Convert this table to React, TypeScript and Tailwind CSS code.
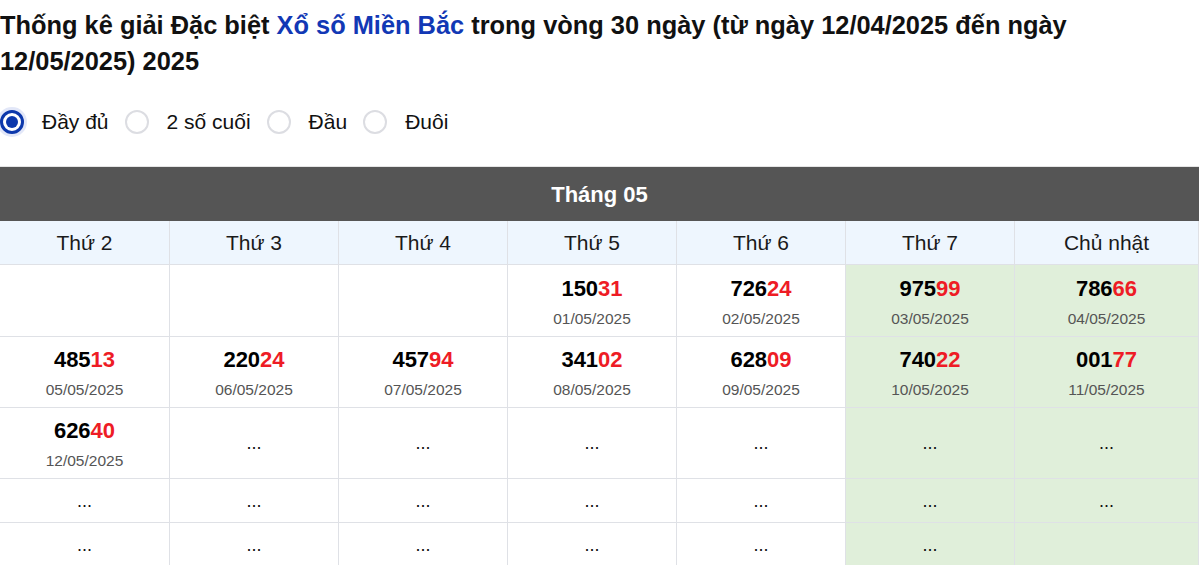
import React from "react";

type Cell = { num?: string; date?: string; dots?: boolean };

const rows: { h: string; cells: Cell[] }[] = [
  {
    h: "h-[72px]",
    cells: [
      {},
      {},
      {},
      { num: "15031", date: "01/05/2025" },
      { num: "72624", date: "02/05/2025" },
      { num: "97599", date: "03/05/2025" },
      { num: "78666", date: "04/05/2025" },
    ],
  },
  {
    h: "h-[71px]",
    cells: [
      { num: "48513", date: "05/05/2025" },
      { num: "22024", date: "06/05/2025" },
      { num: "45794", date: "07/05/2025" },
      { num: "34102", date: "08/05/2025" },
      { num: "62809", date: "09/05/2025" },
      { num: "74022", date: "10/05/2025" },
      { num: "00177", date: "11/05/2025" },
    ],
  },
  {
    h: "h-[71px]",
    cells: [
      { num: "62640", date: "12/05/2025" },
      { dots: true },
      { dots: true },
      { dots: true },
      { dots: true },
      { dots: true },
      { dots: true },
    ],
  },
  {
    h: "h-[44px]",
    cells: Array.from({ length: 7 }, () => ({ dots: true })),
  },
  {
    h: "h-[44px]",
    cells: [
      { dots: true },
      { dots: true },
      { dots: true },
      { dots: true },
      { dots: true },
      { dots: true },
      {},
    ],
  },
];

const days = ["Thứ 2", "Thứ 3", "Thứ 4", "Thứ 5", "Thứ 6", "Thứ 7", "Chủ nhật"];

function Radio({ checked, label }: { checked?: boolean; label: string }) {
  return (
    <label className="flex items-center">
      {checked ? (
        <span className="flex h-[24px] w-[24px] items-center justify-center rounded-full border-[3px] border-[#0c38ac] bg-white shadow-[0_0_0_3px_rgba(13,60,200,0.12)]">
          <span className="h-[12px] w-[12px] rounded-full bg-[#0c38ac]" />
        </span>
      ) : (
        <span className="h-[24px] w-[24px] rounded-full border-2 border-[#dcdde2] bg-white" />
      )}
      <span className="ml-[18px] mr-[16px] text-[21px] leading-[24px] text-[#111]">{label}</span>
    </label>
  );
}

export default function App() {
  return (
    <div className="w-[1200px] bg-white font-['Liberation_Sans',Arial,sans-serif] text-black">
      <h1 className="max-w-[1110px] pt-[7px] text-[25.4px] font-bold leading-[36px] text-[#111]">
        Thống kê giải Đặc biệt <span className="text-[#1238b5]">Xổ số Miền Bắc</span> trong vòng 30 ngày (từ ngày 12/04/2025 đến ngày 12/05/2025) 2025
      </h1>

      <div className="mt-[31px] flex items-center">
        <Radio checked label="Đầy đủ" />
        <Radio label="2 số cuối" />
        <Radio label="Đầu" />
        <Radio label="Đuôi" />
      </div>

      <div className="mt-[32px] w-[1199px]">
        <div className="flex h-[55px] items-center justify-center border-t border-[#e5e5e5] bg-[#555555] text-[22px] font-bold text-white">
          Tháng 05
        </div>
        <div className="grid grid-cols-[169px_169px_169px_169px_169px_169px_185px]">
          {days.map((d, i) => (
            <div
              key={d}
              className={`flex h-[44px] items-center justify-center border-b border-[#dfe1e6] bg-[#eef6fe] text-[21px] text-[#1a1a1a] ${
                i > 0 ? "border-l" : ""
              } ${i === 6 ? "border-r" : ""}`}
            >
              {d}
            </div>
          ))}
          {rows.map((r, ri) =>
            r.cells.map((c, ci) => (
              <div
                key={`${ri}-${ci}`}
                className={`flex flex-col items-center justify-center border-b border-[#dfe1e6] ${r.h} ${
                  ci > 0 ? "border-l" : ""
                } ${ci === 6 ? "border-r" : ""} ${ci >= 5 ? "bg-[#e0efda]" : "bg-white"}`}
              >
                {c.num && (
                  <>
                    <div className="mt-[4px] text-[22px] font-bold leading-[26px] text-black">
                      {c.num.slice(0, 3)}
                      <span className="text-[#ee1c25]">{c.num.slice(3)}</span>
                    </div>
                    <div className="mt-[6px] text-[15.5px] leading-[22px] text-[#555]">{c.date}</div>
                  </>
                )}
                {c.dots && <div className="text-[18px] leading-[24px] text-[#111]">...</div>}
              </div>
            ))
          )}
        </div>
      </div>
    </div>
  );
}
